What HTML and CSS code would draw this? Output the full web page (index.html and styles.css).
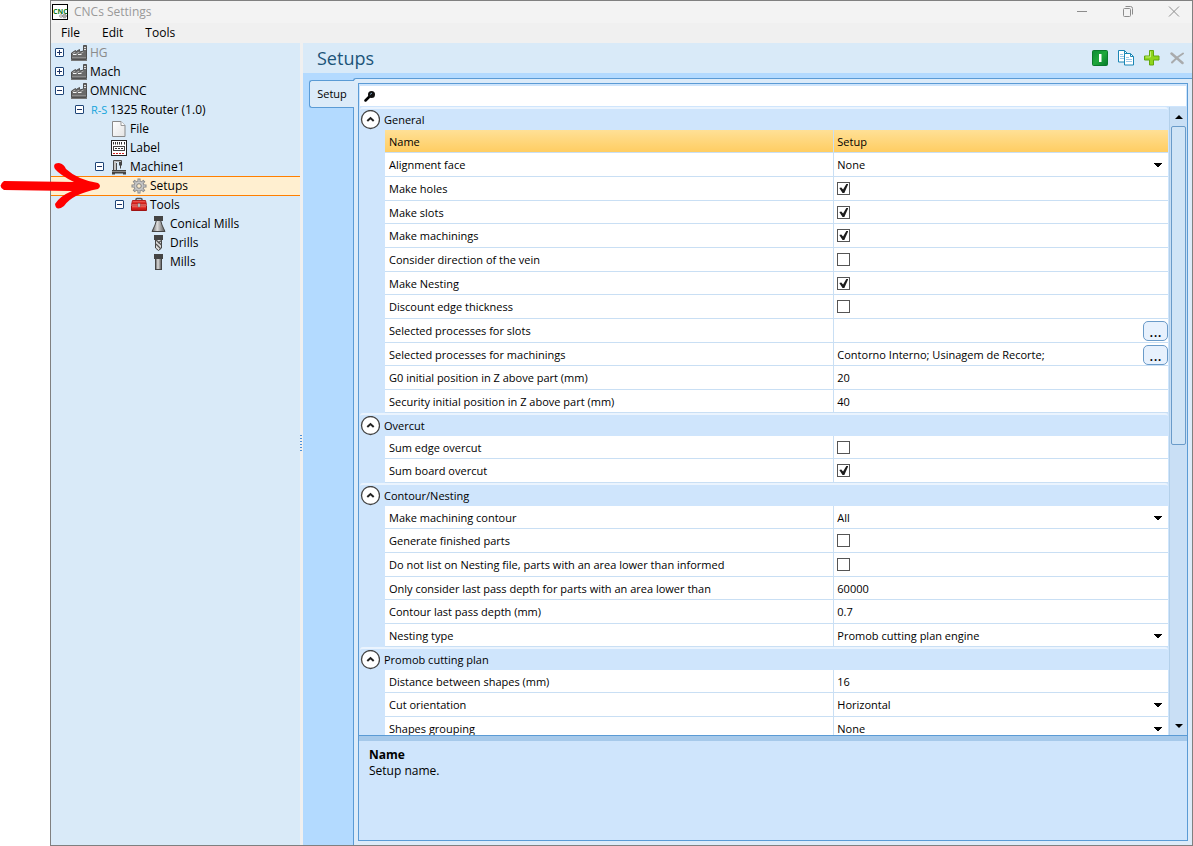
FILE: index.html
```html
<!DOCTYPE html>
<html lang="en">
<head>
    <meta charset="UTF-8">
    <meta name="viewport" content="width=device-width, initial-scale=1.0">
    <title>CNCs Settings</title>
    <link rel="stylesheet" href="styles.css">
</head>
<body>
    <!-- Shared icons -->
    <svg class="icon-defs" aria-hidden="true">
        <defs>
            <linearGradient id="steel" x1="0" x2="1" y1="0" y2="0">
                <stop offset="0" stop-color="#555"/>
                <stop offset="0.4" stop-color="#ddd"/>
                <stop offset="1" stop-color="#555"/>
            </linearGradient>
            <linearGradient id="red" x1="0" x2="0" y1="0" y2="1">
                <stop offset="0" stop-color="#f57a70"/>
                <stop offset="0.5" stop-color="#dc2420"/>
                <stop offset="1" stop-color="#b81414"/>
            </linearGradient>
            <linearGradient id="green" x1="0" x2="1" y1="0" y2="1">
                <stop offset="0" stop-color="#0c8c34"/>
                <stop offset="0.5" stop-color="#1fa83c"/>
                <stop offset="1" stop-color="#067a2a"/>
            </linearGradient>
            <linearGradient id="paper" x1="0" x2="1" y1="0" y2="1">
                <stop offset="0" stop-color="#fff"/>
                <stop offset="1" stop-color="#e4e4e4"/>
            </linearGradient>
            <symbol id="factory" viewBox="0 0 16 16">
                <path d="M0.5 14.5V8l4-2.500V7l4-2.500V7l4-1V0.500h3v14z" fill="#6a6a6a" stroke="#505050"/>
                <path d="M13 2.500h2M13 4.500h2" stroke="#ddd"/>
                <path d="M1.500 8.500l3-1.500M5.500 8.500l3-1.500M9.500 8.500l3-1.500" stroke="#aaa"/>
                <path d="M2 9.500h3.500M7 9.500h3.500" stroke="#f4f4f4"/>
                <path d="M1 12.500h14" stroke="#8c8c8c"/>
                <path d="M0 15.500h16" stroke="#777"/>
            </symbol>
            <symbol id="plus-box" viewBox="0 0 10 10">
                <rect x="0.5" y="0.5" width="8" height="8" rx="0.5" fill="#fff" stroke="#1f4577"/>
                <path d="M2 4.500h5M4.500 2v5" stroke="#1f3566"/>
            </symbol>
            <symbol id="minus-box" viewBox="0 0 10 10">
                <rect x="0.5" y="0.5" width="8" height="8" rx="0.5" fill="#fff" stroke="#1f4577"/>
                <path d="M2 4.500h5" stroke="#1f3566"/>
            </symbol>
            <symbol id="file" viewBox="0 0 16 16">
                <path d="M1.500 0.500h8.500l4 4v11h-12.500z" fill="url(#paper)" stroke="#8a8a8a"/>
                <path d="M10 0.500v4h4" fill="#fff" stroke="#999"/>
            </symbol>
            <symbol id="label" viewBox="0 0 16 16">
                <rect x="0.5" y="0.5" width="15" height="15" fill="#fff" stroke="#222"/>
                <path d="M2.500 2v3M4.500 2v3M6.500 2v3M8.500 2v3M10.500 2v3M13.500 2v3" stroke="#333" stroke-dasharray="2 0.500"/>
                <rect x="2.500" y="6.500" width="11" height="4" fill="none" stroke="#444"/>
                <path d="M4 8.500h2M7 8.500h2M10 8.500h2" stroke="#333"/>
                <path d="M2 13.500h12" stroke="#d02020" stroke-dasharray="2 1"/>
            </symbol>
            <symbol id="machine" viewBox="0 0 16 16">
                <path d="M3 2h2v9H3z" fill="#c4c4c4"/>
                <path d="M2.500 11V1.500h8V4M5.500 11V4" fill="none" stroke="#4a4a4a"/>
                <path d="M5 2.500h5" stroke="#b0b0b0"/>
                <path d="M8 3h3v3.500h-1V9.500H9V6.500H8z" fill="#444"/>
                <path d="M1 11h14v1H1zM1 13h14v2.500h-3V14.500H4v1H1z" fill="#444"/>
                <path d="M1 12.500h14" stroke="#8a8a8a"/>
            </symbol>
            <symbol id="gear" viewBox="0 0 16 16">
                <path d="M8 0.500v15M0.500 8h15M2.700 2.700l10.600 10.600M13.300 2.700L2.700 13.300" stroke="#858585" stroke-width="3"/>
                <circle cx="8" cy="8" r="5" fill="#c8c8c8" stroke="#8c8c8c"/>
                <path d="M8 1.500v2M8 12.500v2M1.500 8h2M12.500 8h2M3.500 3.500l1.200 1.200M11.300 11.300l1.200 1.200M12.500 3.500l-1.200 1.200M4.700 11.300l-1.200 1.200" stroke="#c8c8c8" stroke-width="1.500"/>
                <circle cx="8" cy="8" r="2.300" fill="#fdeccb" stroke="#808080"/>
            </symbol>
            <symbol id="toolbox" viewBox="0 0 16 16">
                <path d="M5 4V2.500Q5 1.500 6 1.500h4q1 0 1 1V4" fill="none" stroke="#555" stroke-width="1.500"/>
                <path d="M1.500 3.500h13l1 4.500h-15z" fill="url(#red)" stroke="#b32020"/>
                <path d="M0.500 8.500h15v5h-15z" fill="url(#red)" stroke="#a01414"/>
                <path d="M0.500 8h15" stroke="#fb9a92"/>
                <rect x="7" y="6.500" width="2" height="3.500" fill="#ddd" stroke="#666" stroke-width="0.500"/>
            </symbol>
            <symbol id="cone" viewBox="0 0 16 16">
                <path d="M5.500 4h4l1.500 5 3 6.500H1L4 9z" fill="url(#steel)"/>
                <path d="M5.500 4L4 9l-3 6.500h13L11 9 9.500 4" fill="none" stroke="#444"/>
                <rect x="3" y="0" width="9" height="5" fill="#444"/>
            </symbol>
            <symbol id="drill" viewBox="0 0 16 16">
                <path d="M4.500 4h6v9l-3 2.500-3-2.500z" fill="#ddd" stroke="#444"/>
                <path d="M5 5l5.500 5M5 9l5 5M10.500 5.500L7 8" stroke="#555" stroke-width="1.300"/>
                <rect x="3" y="0" width="9" height="5" fill="#444"/>
            </symbol>
            <symbol id="mill" viewBox="0 0 16 16">
                <rect x="4.500" y="4" width="6" height="11.500" fill="url(#steel)" stroke="#444"/>
                <rect x="3" y="0" width="9" height="5" fill="#444"/>
            </symbol>
            <symbol id="chevron" viewBox="0 0 20 20">
                <circle cx="10.500" cy="9.500" r="9" fill="#fff" stroke="#444" stroke-width="1.300"/>
                <path d="M7.300 11l3.200-3 3.200 3" fill="none" stroke="#222" stroke-width="2"/>
            </symbol>
        </defs>
    </svg>

    <div class="window">
        <header class="titlebar">
            <svg class="icon" viewBox="0 0 16 16">
                <rect x="0.5" y="0.500" width="15" height="15" fill="#fff" stroke="#000"/>
                <text x="1" y="10" class="app-icon-text">CNC</text>
                <circle cx="9" cy="12" r="1.500" fill="#ccc" stroke="#999" stroke-dasharray="1 0.500"/>
                <circle cx="12.500" cy="12" r="2" fill="#aaa" stroke="#888" stroke-dasharray="1 0.500"/>
            </svg>
            <h1>CNCs Settings</h1>
            <div class="window-controls">
                <button type="button" aria-label="Minimize"><svg class="glyph" viewBox="0 0 12 12"><path d="M1 5.500h10"/></svg></button>
                <button type="button" aria-label="Restore"><svg class="glyph" viewBox="0 0 12 12"><rect x="1.500" y="2.500" width="7" height="8" rx="1"/><path d="M3.500 0.500h5q2 0 2 2v6"/></svg></button>
                <button type="button" aria-label="Close"><svg class="glyph" viewBox="0 0 12 12"><path d="M1 0.500l10 10M11 0.500L1 10.500"/></svg></button>
            </div>
        </header>
        <nav class="menubar">
            <button type="button">File</button>
            <button type="button">Edit</button>
            <button type="button">Tools</button>
        </nav>

        <div class="workspace">
            <aside class="sidebar">
                <ul class="tree">
                    <li class="node disabled"><svg class="toggle"><use href="#plus-box"/></svg><svg class="icon"><use href="#factory"/></svg><span>HG</span></li>
                    <li class="node"><svg class="toggle"><use href="#plus-box"/></svg><svg class="icon"><use href="#factory"/></svg><span>Mach</span></li>
                    <li class="node"><svg class="toggle"><use href="#minus-box"/></svg><svg class="icon"><use href="#factory"/></svg><span>OMNICNC</span></li>
                    <li class="node level-1"><svg class="toggle"><use href="#minus-box"/></svg><span class="icon rs">R-S</span><span>1325 Router (1.0)</span></li>
                    <li class="node level-2"><span class="toggle"></span><svg class="icon"><use href="#file"/></svg><span>File</span></li>
                    <li class="node level-2"><span class="toggle"></span><svg class="icon"><use href="#label"/></svg><span>Label</span></li>
                    <li class="node level-2"><svg class="toggle"><use href="#minus-box"/></svg><svg class="icon"><use href="#machine"/></svg><span>Machine1</span></li>
                    <li class="node level-3 selected"><span class="toggle"></span><svg class="icon"><use href="#gear"/></svg><span>Setups</span>
                        <svg class="pointer" viewBox="0 0 102 50">
                            <path d="M4 20L74 21Q60 14 55 8Q52 2 59 2Q64 3 66 8Q78 19 98 22Q102 25 98 28Q72 33 64 45Q56 51 55 43Q60 35 72 30L4 29Q-3 25 4 20z" fill="#f00"/>
                        </svg>
                    </li>
                    <li class="node level-3"><svg class="toggle"><use href="#minus-box"/></svg><svg class="icon"><use href="#toolbox"/></svg><span>Tools</span></li>
                    <li class="node level-4"><span class="toggle"></span><svg class="icon"><use href="#cone"/></svg><span>Conical Mills</span></li>
                    <li class="node level-4"><span class="toggle"></span><svg class="icon"><use href="#drill"/></svg><span>Drills</span></li>
                    <li class="node level-4"><span class="toggle"></span><svg class="icon"><use href="#mill"/></svg><span>Mills</span></li>
                </ul>
            </aside>
            <div class="splitter"><span class="grip"></span></div>

            <main class="content">
                <div class="content-header">
                    <h2>Setups</h2>
                    <div class="toolbar">
                        <button type="button" aria-label="Active">
                            <svg class="icon" viewBox="0 0 16 16"><rect x="0.500" y="0.500" width="15" height="15" rx="1" fill="url(#green)" stroke="#0a7a2a"/><rect x="7" y="4" width="2.500" height="8" fill="#fff"/></svg>
                        </button>
                        <button type="button" aria-label="Duplicate">
                            <svg class="icon" viewBox="0 0 16 16"><path d="M0.500 0.500h6l3 3v8.500h-9z" fill="#fff" stroke="#1b86b5"/><path d="M6.500 0.500v3h3" fill="none" stroke="#1b86b5"/><path d="M2 4.500h3M2 6.500h4M2 8.500h4" stroke="#9cc8e8"/><path d="M6.500 3.500h6l3 3v8.500h-9z" fill="#fff" stroke="#1b86b5"/><path d="M12.500 3.500v3h3" fill="none" stroke="#1b86b5"/><path d="M8 7.500h3M8 9.500h6M8 11.500h6" stroke="#9cc8e8"/></svg>
                        </button>
                        <button type="button" aria-label="Add">
                            <svg class="icon" viewBox="0 0 16 16"><path d="M5.500 0.500h4v5.500h5.500v4h-5.500v5h-4v-5H0.500V6h5z" fill="#8ed51c" stroke="#62a80c"/><path d="M6.500 1.500v5.500h-5" fill="none" stroke="#c4f07a"/></svg>
                        </button>
                        <button type="button" aria-label="Delete" disabled>
                            <svg class="icon" viewBox="0 0 16 16"><path d="M1.500 3.500l11 9.500" stroke="#a9abad" stroke-width="2.500" stroke-linecap="round"/><path d="M13 3.500Q7 7 2 12.500" stroke="#a9abad" stroke-width="2" stroke-linecap="round" fill="none"/></svg>
                        </button>
                    </div>
                </div>

                <div class="tab-area">
                    <button type="button" class="tab">Setup</button>
                    <section class="panel">
                        <form class="properties">
                            <label class="search">
                                <svg class="search-icon" viewBox="0 0 12 12"><path d="M1.500 10.500l4-4" stroke="#000" stroke-width="2.500" stroke-linecap="round"/><circle cx="7.500" cy="4.500" r="3.500" fill="#111"/><path d="M6 4.500l2-1.500" stroke="#7fa3bd"/></svg>
                                <input type="text" aria-label="Search properties">
                            </label>

                            <div class="grid-area">
                                <div class="grid">
                                    <fieldset class="group">
                                        <legend class="group-title"><button type="button" aria-label="Collapse General"><svg class="expander"><use href="#chevron"/></svg></button><span>General</span></legend>
                                        <div class="rows">
                                            <div class="row active"><label for="name">Name</label><div class="value"><input type="text" id="name" value="Setup"></div></div>
                                            <div class="row"><label for="alignment">Alignment face</label><div class="value"><select id="alignment"><option>None</option></select></div></div>
                                            <div class="row"><label for="holes">Make holes</label><div class="value"><input type="checkbox" id="holes" checked></div></div>
                                            <div class="row"><label for="slots">Make slots</label><div class="value"><input type="checkbox" id="slots" checked></div></div>
                                            <div class="row"><label for="machinings">Make machinings</label><div class="value"><input type="checkbox" id="machinings" checked></div></div>
                                            <div class="row"><label for="vein">Consider direction of the vein</label><div class="value"><input type="checkbox" id="vein"></div></div>
                                            <div class="row"><label for="nesting">Make Nesting</label><div class="value"><input type="checkbox" id="nesting" checked></div></div>
                                            <div class="row"><label for="thickness">Discount edge thickness</label><div class="value"><input type="checkbox" id="thickness"></div></div>
                                            <div class="row"><label for="slotProcesses">Selected processes for slots</label><div class="value"><input type="text" id="slotProcesses"><button type="button" class="browse">...</button></div></div>
                                            <div class="row"><label for="machiningProcesses">Selected processes for machinings</label><div class="value"><input type="text" id="machiningProcesses" value="Contorno Interno; Usinagem de Recorte;"><button type="button" class="browse">...</button></div></div>
                                            <div class="row"><label for="g0">G0 initial position in Z above part (mm)</label><div class="value"><input type="text" id="g0" value="20"></div></div>
                                            <div class="row"><label for="security">Security initial position in Z above part (mm)</label><div class="value"><input type="text" id="security" value="40"></div></div>
                                        </div>
                                    </fieldset>

                                    <fieldset class="group">
                                        <legend class="group-title"><button type="button" aria-label="Collapse Overcut"><svg class="expander"><use href="#chevron"/></svg></button><span>Overcut</span></legend>
                                        <div class="rows">
                                            <div class="row"><label for="edgeOvercut">Sum edge overcut</label><div class="value"><input type="checkbox" id="edgeOvercut"></div></div>
                                            <div class="row"><label for="boardOvercut">Sum board overcut</label><div class="value"><input type="checkbox" id="boardOvercut" checked></div></div>
                                        </div>
                                    </fieldset>

                                    <fieldset class="group">
                                        <legend class="group-title"><button type="button" aria-label="Collapse Contour/Nesting"><svg class="expander"><use href="#chevron"/></svg></button><span>Contour/Nesting</span></legend>
                                        <div class="rows">
                                            <div class="row"><label for="contour">Make machining contour</label><div class="value"><select id="contour"><option>All</option></select></div></div>
                                            <div class="row"><label for="finished">Generate finished parts</label><div class="value"><input type="checkbox" id="finished"></div></div>
                                            <div class="row"><label for="doNotList">Do not list on Nesting file, parts with an area lower than informed</label><div class="value"><input type="checkbox" id="doNotList"></div></div>
                                            <div class="row"><label for="lastPassArea">Only consider last pass depth for parts with an area lower than</label><div class="value"><input type="text" id="lastPassArea" value="60000"></div></div>
                                            <div class="row"><label for="lastPassDepth">Contour last pass depth (mm)</label><div class="value"><input type="text" id="lastPassDepth" value="0.7"></div></div>
                                            <div class="row"><label for="nestingType">Nesting type</label><div class="value"><select id="nestingType"><option>Promob cutting plan engine</option></select></div></div>
                                        </div>
                                    </fieldset>

                                    <fieldset class="group">
                                        <legend class="group-title"><button type="button" aria-label="Collapse Promob cutting plan"><svg class="expander"><use href="#chevron"/></svg></button><span>Promob cutting plan</span></legend>
                                        <div class="rows">
                                            <div class="row"><label for="distance">Distance between shapes (mm)</label><div class="value"><input type="text" id="distance" value="16"></div></div>
                                            <div class="row"><label for="orientation">Cut orientation</label><div class="value"><select id="orientation"><option>Horizontal</option></select></div></div>
                                            <div class="row"><label for="grouping">Shapes grouping</label><div class="value"><select id="grouping"><option>None</option></select></div></div>
                                        </div>
                                    </fieldset>
                                </div>
                                <div class="scrollbar">
                                    <button type="button" class="scroll-up" aria-label="Scroll up"></button>
                                    <div class="track"><div class="thumb"></div></div>
                                    <button type="button" class="scroll-down" aria-label="Scroll down"></button>
                                </div>
                            </div>

                            <div class="details">
                                <h3>Name</h3>
                                <p>Setup name.</p>
                            </div>
                        </form>
                    </section>
                </div>
            </main>
        </div>
    </div>
</body>
</html>
```

FILE: styles.css
```css
* {
    box-sizing: border-box;
}
body {
    margin: 0;
    padding-left: 50px;
    background: #fff;
    color: #000;
    font-family: "Open Sans", "Noto Sans", sans-serif;
    font-size: 12px;
    line-height: 16px;
}
button, input, select {
    margin: 0;
    padding: 0;
    border: 0;
    background: none;
    color: inherit;
    font: inherit;
    outline: none;
}
h1, h2, h3, p, ul {
    margin: 0;
    padding: 0;
    font-size: 12px;
    font-weight: normal;
}
.icon-defs {
    position: absolute;
    width: 0;
    height: 0;
}
.icon {
    display: block;
    flex: none;
    width: 16px;
    height: 16px;
}

/* Window */
.window {
    display: flex;
    flex-direction: column;
    height: 100vh;
    border: 1px solid #808080;
    background: #f0f0f0;
}
.titlebar {
    display: flex;
    align-items: center;
    height: 22px;
    padding: 0 8px 0 1px;
    background: #f3f3f3;
}
.titlebar h1 {
    margin-left: 6px;
    color: #999;
}
.app-icon-text {
    fill: #0a7a1a;
    font-size: 7px;
    font-weight: bold;
}
.window-controls {
    display: flex;
    gap: 10px;
    margin-left: auto;
}
.window-controls button {
    display: flex;
    justify-content: center;
    width: 36px;
}
.window-controls button:last-child {
    width: 20px;
    margin-left: 8px;
}
.glyph {
    width: 12px;
    height: 12px;
    fill: none;
    stroke: #8c8c8c;
}
.menubar {
    display: flex;
    height: 20px;
}
.menubar button {
    padding: 0 12px 0 10px;
}
.workspace {
    display: flex;
    flex: 1;
    min-height: 0;
}

/* Tree */
.sidebar {
    flex: none;
    width: 249px;
    background: #d9eaf8;
}
.tree {
    list-style: none;
}
.node {
    position: relative;
    display: flex;
    align-items: center;
    height: 19px;
    padding-left: 4px;
}
.toggle {
    flex: none;
    width: 10px;
    height: 10px;
    margin-right: 6px;
}
.node .icon {
    margin-right: 3px;
}
.level-1 { padding-left: 24px; }
.level-2 { padding-left: 44px; }
.level-3 { padding-left: 64px; }
.level-4 { padding-left: 84px; }
.disabled span {
    color: #8a8a8a;
}
.selected {
    border-top: 1px solid #ff7f00;
    background: #ffefd0;
    box-shadow: 0 1px #ff7f00;
}
.rs {
    color: #14a5dc;
    font-size: 11px;
    white-space: nowrap;
}
.pointer {
    position: absolute;
    left: -51px;
    top: -16px;
    z-index: 2;
    width: 102px;
    height: 50px;
}
.splitter {
    display: flex;
    flex: none;
    align-items: center;
    width: 3px;
}
.grip {
    width: 2px;
    height: 18px;
    background: repeating-linear-gradient(#4a90d9 0 1px, transparent 1px 3px);
}

/* Content */
.content {
    display: flex;
    flex: 1;
    flex-direction: column;
    min-width: 0;
    background: #b3daff;
}
.content-header {
    display: flex;
    align-items: center;
    justify-content: space-between;
    height: 30px;
    padding: 0 6px 0 14px;
    background: #d9eaf8;
}
.content-header h2 {
    color: #1c5479;
    font-size: 18px;
    line-height: 24px;
}
.toolbar {
    display: flex;
    gap: 10px;
}
.tab-area {
    display: flex;
    flex: 1;
    align-items: flex-start;
    min-height: 0;
    padding: 5px 0 0 6px;
}
.tab {
    position: relative;
    flex: none;
    width: 45px;
    height: 28px;
    margin: 2px -1px 0 0;
    border: 1px solid #5b9bd5;
    border-right: 0;
    border-radius: 3px 0 0 3px;
    background: #dcebf9;
    font-size: 11px;
}
.panel {
    display: flex;
    flex: 1;
    align-self: stretch;
    min-width: 0;
    padding: 4px;
    border: 1px solid #5b9bd5;
    border-width: 1px 0 0 1px;
    border-radius: 3px 0 0 0;
    background: #dcebf9;
}
.properties {
    display: flex;
    flex: 1;
    flex-direction: column;
    min-width: 0;
    border: 1px solid #5b9bd5;
    background: #cfe5fc;
    font-size: 11px;
}
.search {
    display: flex;
    flex: none;
    align-items: center;
    height: 20px;
    margin: 2px 1px 1px;
    padding-left: 4px;
    background: #fff;
}
.search-icon {
    width: 12px;
    height: 12px;
}
.search input {
    flex: 1;
}
.grid-area {
    display: flex;
    flex: 1;
    min-height: 0;
}
.grid {
    flex: 1;
    overflow: hidden;
    padding: 0 1px;
}

/* Property groups */
.group {
    min-width: 0;
    margin: 0;
    padding: 0;
    border: 0;
    border-top: 2px solid #ebf4fe;
    border-radius: 3px;
}
.group-title {
    display: flex;
    float: left;
    align-items: center;
    width: 100%;
    height: 21px;
    padding: 0;
}
.group-title button {
    display: flex;
    margin-right: 4px;
}
.expander {
    width: 20px;
    height: 20px;
}
.rows {
    clear: both;
    margin-left: 25px;
    background: #fff;
}
.row {
    display: grid;
    grid-template-columns: calc(57% + 2px) 1fr;
    height: 24px;
    border-bottom: 1px solid #c9dff4;
}
/* keeps the average pitch a little under 24px */
.row:nth-child(3n+1), .row:nth-child(n+3):last-child {
    height: 23px;
}
.row label {
    padding: 4px;
    line-height: 15px;
    white-space: nowrap;
}
.value {
    display: flex;
    align-items: center;
    min-width: 0;
    padding-left: 3px;
    border-left: 1px solid #c9dff4;
}
.value input[type="text"] {
    flex: 1;
    min-width: 0;
}
.value select {
    width: 100%;
    height: 22px;
    appearance: none;
    background-image: linear-gradient(#000, #000), linear-gradient(#000, #000), linear-gradient(#000, #000), linear-gradient(#000, #000);
    background-position: right 6px top 9px, right 7px top 10px, right 8px top 11px, right 9px top 12px;
    background-repeat: no-repeat;
    background-size: 8px 1px, 6px 1px, 4px 1px, 2px 1px;
}
.value input[type="checkbox"] {
    width: 13px;
    height: 13px;
    border: 1px solid #555;
    background: #fff;
    appearance: none;
}
.value input[type="checkbox"]:checked::before {
    content: "";
    display: block;
    width: 9px;
    height: 9px;
    margin: 1px;
    background: #1c1c1c;
    clip-path: polygon(0 45%, 22% 38%, 42% 62%, 78% 0, 100% 0, 56% 100%, 36% 100%);
}
.active {
    background: linear-gradient(#ffe096, #ffcd62);
}
.browse {
    width: 25px;
    height: 20px;
    border: 1px solid #6a9bc9;
    border-radius: 5px;
    background: #e7f1fd;
    font-size: 16px;
    line-height: 14px;
}

/* Scrollbar */
.scrollbar {
    display: flex;
    flex: none;
    flex-direction: column;
    width: 18px;
    border-left: 1px solid #b3d0ea;
    background: #c9dff5;
}
.scroll-up, .scroll-down {
    display: flex;
    flex: none;
    align-items: center;
    justify-content: center;
    height: 19px;
}
.scroll-up::before, .scroll-down::before {
    content: "";
    border: 4px solid transparent;
    border-top-width: 0;
    border-bottom-color: #000;
}
.scroll-down::before {
    border-width: 4px 4px 0;
    border-top-color: #000;
}
.track {
    flex: 1;
    padding: 0 1px;
}
.thumb {
    height: 54%;
    border: 1px solid #6a9bc9;
    border-radius: 2px;
    background: #d0e4f6;
}

/* Details */
.details {
    flex: none;
    height: 105px;
    padding: 6px 10px;
    border-top: 1px solid #5b9bd5;
    box-shadow: inset 0 5px #a6c9ea;
}
.details h3 {
    padding-top: 5px;
    font-weight: bold;
}
```
